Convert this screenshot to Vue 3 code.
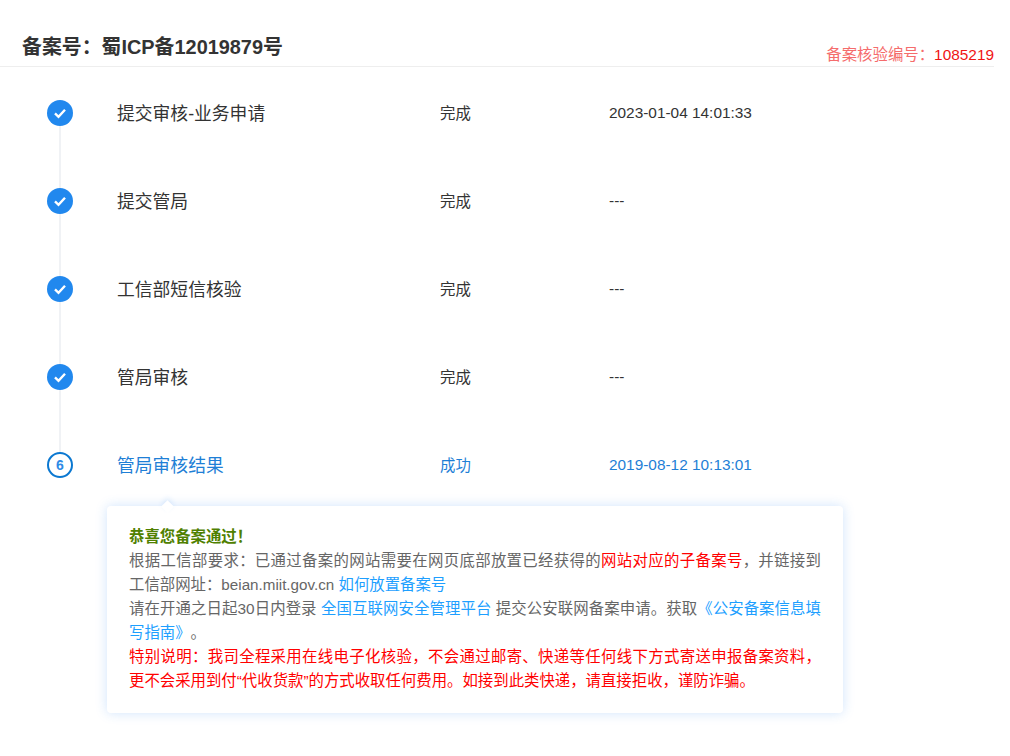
<script setup>
const steps = [
  { name: '提交审核-业务申请', status: '完成', time: '2023-01-04 14:01:33' },
  { name: '提交管局', status: '完成', time: '---' },
  { name: '工信部短信核验', status: '完成', time: '---' },
  { name: '管局审核', status: '完成', time: '---' },
  { name: '管局审核结果', status: '成功', time: '2019-08-12 10:13:01', current: true, num: 6 },
]
</script>

<template>
  <div class="page">
    <header class="head">
      <h1 class="title">备案号：蜀ICP备12019879号</h1>
      <div class="check">备案核验编号：<span class="check-no">1085219</span></div>
    </header>

    <ol class="steps">
      <li v-for="s in steps" :key="s.name" class="step" :class="{ current: s.current }">
        <span class="dot">
          <template v-if="s.current">{{ s.num }}</template>
          <svg v-else width="14" height="14" viewBox="0 0 14 14" aria-hidden="true">
            <path d="M2 7.4 5.5 10.8 12 3.8" fill="none" stroke="#fff" stroke-width="2.4" />
          </svg>
        </span>
        <span class="name">{{ s.name }}</span>
        <span class="status">{{ s.status }}</span>
        <span class="time">{{ s.time }}</span>
      </li>
    </ol>

    <section class="card">
      <p class="ok">恭喜您备案通过！</p>
      <p>根据工信部要求：已通过备案的网站需要在网页底部放置已经获得的<span class="red">网站对应的子备案号</span>，并链接到工信部网址：<span class="latin">beian.miit.gov.cn</span> <a class="link">如何放置备案号</a></p>
      <p>请在开通之日起30日内登录 <a class="link">全国互联网安全管理平台</a> 提交公安联网备案申请。获取<a class="link">《公安备案信息填写指南》</a>。</p>
      <p class="red">特别说明：我司全程采用在线电子化核验，不会通过邮寄、快递等任何线下方式寄送申报备案资料，更不会采用到付“代收货款”的方式收取任何费用。如接到此类快递，请直接拒收，谨防诈骗。</p>
    </section>
  </div>
</template>

<style>
body { background: #fff; }
</style>

<style scoped>
.page {
  width: 1010px;
  height: 756px;
  overflow: hidden;
  font-family: "Liberation Sans", "Noto Sans CJK SC", sans-serif;
  color: #333;
}
.head {
  width: 994px;
  height: 67px;
  box-sizing: border-box;
  border-bottom: 1px solid #eee;
  padding-left: 22px;
  display: flex;
  justify-content: space-between;
  align-items: flex-end;
}
.title {
  margin: 0 0 4px;
  font-size: 19.9px;
  line-height: 30px;
  font-weight: 700;
}
.check {
  font-size: 15.4px;
  line-height: 20px;
  margin-bottom: 1px;
  color: #f56c6c;
}
.check-no { color: #f01414; }
.steps {
  list-style: none;
  margin: 16px 0 0;
  padding: 0;
  display: flex;
  flex-direction: column;
  gap: 28px;
}
.step {
  height: 60px;
  position: relative;
  display: flex;
  align-items: center;
  padding-left: 47px;
  font-size: 15.4px;
}
.step:not(:last-child)::after {
  content: "";
  position: absolute;
  left: 59px;
  top: 43px;
  height: 62px;
  width: 2px;
  background: #f0f2f5;
}
.dot {
  width: 26px;
  height: 26px;
  box-sizing: border-box;
  border-radius: 50%;
  background: #2188ee;
  display: flex;
  align-items: center;
  justify-content: center;
  flex: none;
}
.name {
  margin: 0 0 3px 44px;
  width: 323px;
  flex: none;
  font-size: 17.8px;
}
.status {
  width: 169px;
  flex: none;
  margin-bottom: 3px;
}
.current { color: #1f7fd6; }
.current .dot {
  background: #fff;
  border: 2px solid #0b78d1;
  font-size: 14px;
  font-weight: 700;
  color: #2f8be6;
}
.card {
  position: relative;
  margin: 11px 0 0 107px;
  width: 736px;
  height: 207px;
  box-sizing: border-box;
  padding: 19px 22px;
  background: #fff;
  border-radius: 4px;
  box-shadow: 0 0 12px rgba(40, 130, 240, 0.22);
  font-size: 15.4px;
  line-height: 24px;
  text-align: justify;
  text-spacing-trim: space-all;
  color: #666;
}
.card::before {
  content: "";
  position: absolute;
  left: 56px;
  top: -4px;
  width: 9px;
  height: 9px;
  background: #fff;
  transform: rotate(45deg);
  box-shadow: -2px -2px 5px rgba(40, 130, 240, 0.12);
}
.card p { margin: 0; position: relative; }
.ok { color: #4f8000; font-weight: 700; }
.red { color: #f00; }
.link { color: #1e9fff; }
.latin { font-size: 15.2px; }
</style>
